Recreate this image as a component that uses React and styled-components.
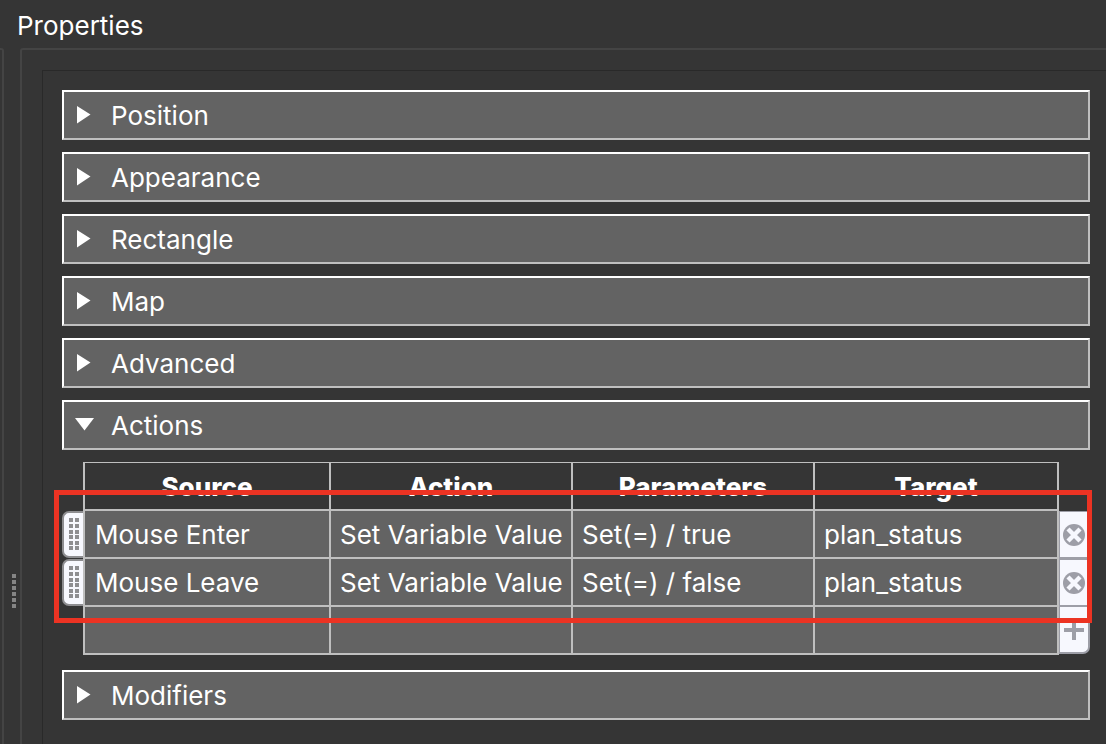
import React, { useState } from 'react';
import styled, { createGlobalStyle } from 'styled-components';

const columns = ['Source', 'Action', 'Parameters', 'Target'];

const actions = [
  ['Mouse Enter', 'Set Variable Value', 'Set(=) / true', 'plan_status'],
  ['Mouse Leave', 'Set Variable Value', 'Set(=) / false', 'plan_status'],
];

const splitterDots = [0, 1, 2, 3, 4, 5];
const gripRows = [0, 6, 12, 17, 23, 28];

const Arrow = ({ open }) => (
  <ArrowIcon viewBox="0 1 20 20" aria-hidden="true">
    <path d={open ? 'M1 3H20L10.5 15.5Z' : 'M3 1L16.5 9.5L3 18.5Z'} />
  </ArrowIcon>
);

const Section = ({ title, open, onToggle, children }) => (
  <section>
    <Heading>
      <HeadingButton type="button" aria-expanded={open} onClick={onToggle}>
        <Arrow open={open} />
        {title}
      </HeadingButton>
    </Heading>
    {open && children}
  </section>
);

const ActionsTable = () => (
  <TableWrap>
    <Table>
      <colgroup>
        <Col $width="21px" />
        <Col $width="248px" />
        <Col $width="242px" />
        <Col $width="242px" />
        <Col />
        <Col $width="31px" />
      </colgroup>
      <thead>
        <tr>
          <ToolCell />
          {columns.map((name) => (
            <HeadCell key={name} scope="col">{name}</HeadCell>
          ))}
          <ToolCell />
        </tr>
      </thead>
      <tbody>
        {actions.map((row) => (
          <tr key={row[0]}>
            <ToolCell>
              <DragHandle type="button" aria-label={`Move ${row[0]}`}>
                <svg width="11" height="33" fill="#8e8e91" aria-hidden="true">
                  {gripRows.map((y) => (
                    <path key={y} d={`M1 ${y}h4v4h-4zM7 ${y}h4v4h-4z`} />
                  ))}
                </svg>
              </DragHandle>
            </ToolCell>
            {row.map((text, i) => (
              <Cell key={columns[i]}>{text}</Cell>
            ))}
            <ToolCell>
              <RowButton type="button" aria-label={`Delete ${row[0]}`}>
                <svg width="22" height="22" viewBox="0 0 22 22" aria-hidden="true">
                  <circle cx="11" cy="11" r="11" fill="#9d9ea7" />
                  <path d="M5 5L17 17M17 5L5 17" stroke="#f7f8fe" strokeWidth="4.4" />
                </svg>
              </RowButton>
            </ToolCell>
          </tr>
        ))}
        <tr>
          <ToolCell />
          {columns.map((name) => (
            <Cell key={name} />
          ))}
          <ToolCell>
            <RowButton type="button" aria-label="Add action" $last>
              <svg width="22" height="22" viewBox="0 0 22 22" aria-hidden="true">
                <path d="M1 11H21M11 1V21" stroke="#9d9ea7" strokeWidth="4" />
              </svg>
            </RowButton>
          </ToolCell>
        </tr>
      </tbody>
    </Table>
    <Highlight />
  </TableWrap>
);

const sections = [
  { title: 'Position' },
  { title: 'Appearance' },
  { title: 'Rectangle' },
  { title: 'Map' },
  { title: 'Advanced' },
  { title: 'Actions', content: <ActionsTable /> },
  { title: 'Modifiers' },
];

const App = () => {
  const [opened, setOpened] = useState({ Actions: true });

  const toggle = (title) => {
    setOpened({ ...opened, [title]: !opened[title] });
  };

  return (
    <>
      <GlobalStyle />
      <Page>
        <Title>Properties</Title>
        <Body>
          <PreviousPane />
          <Splitter>
            {splitterDots.map((i) => (
              <SplitterDot key={i} />
            ))}
          </Splitter>
          <Pane>
            <Sections>
              {sections.map(({ title, content }) => (
                <Section
                  key={title}
                  title={title}
                  open={!!opened[title]}
                  onToggle={() => toggle(title)}
                >
                  {content}
                </Section>
              ))}
            </Sections>
          </Pane>
        </Body>
      </Page>
    </>
  );
};

const GlobalStyle = createGlobalStyle`
  * {
    box-sizing: border-box;
  }

  body {
    margin: 0;
    background: #353535;
    color: #fff;
    font-family: Inter, 'Liberation Sans', sans-serif;
    font-size: 26px;
    line-height: 32px;
  }

  button {
    font: inherit;
    color: inherit;
  }
`;

const Page = styled.main`
  display: flex;
  flex-direction: column;
  min-height: 100vh;
`;

const Title = styled.h1`
  margin: 0;
  padding: 10px 17px 6px;
  font-size: 26px;
  font-weight: 400;
`;

const Body = styled.div`
  display: flex;
  flex: 1;
`;

const PreviousPane = styled.div`
  width: 4px;
  border: solid #444;
  border-width: 2px 2px 0 0;
  border-top-right-radius: 3px;
`;

const Splitter = styled.div`
  display: flex;
  flex-direction: column;
  justify-content: flex-end;
  align-items: center;
  gap: 2px;
  width: 16px;
  padding: 0 0 136px 4px;
`;

const SplitterDot = styled.span`
  width: 4px;
  height: 4px;
  background: #858585;
`;

const Pane = styled.div`
  display: flex;
  flex: 1;
  min-width: 0;
  padding: 20px 0 0 20px;
  border: solid #444;
  border-width: 2px 0 0 2px;
  border-top-left-radius: 3px;
`;

const Sections = styled.div`
  display: flex;
  flex-direction: column;
  flex: 1;
  gap: 12px;
  min-width: 0;
  padding: 19px 16px 19px 19px;
  border: solid #292929;
  border-width: 1px 0 0 1px;
`;

const Heading = styled.h2`
  margin: 0;
  font-size: 26px;
  font-weight: 400;
`;

const HeadingButton = styled.button`
  display: flex;
  align-items: center;
  gap: 17px;
  width: 100%;
  height: 50px;
  padding: 2px 10px 0;
  border: 2px solid;
  border-color: #fff #bfbfbf #bfbfbf #fff;
  background: #636363;
  text-align: left;
`;

const ArrowIcon = styled.svg`
  width: 20px;
  height: 20px;
  fill: #fff;
  overflow: visible;
`;

const TableWrap = styled.div`
  position: relative;
  padding: 12px 0 3px;
`;

const Table = styled.table`
  width: 100%;
  table-layout: fixed;
  border-spacing: 0;
`;

const Col = styled.col`
  width: ${({ $width }) => $width || 'auto'};
`;

const HeadCell = styled.th`
  height: 49px;
  padding: 2px 0 0;
  border: solid #bfbfbf;
  border-width: 1px 2px 2px 0;
  font-weight: 800;

  &:nth-child(2) {
    border-left-width: 2px;
  }
`;

const Cell = styled.td`
  height: 48px;
  padding: 2px 9px 0;
  border: solid #bfbfbf;
  border-width: 0 2px 2px 0;
  background: #636363;
  white-space: nowrap;

  &:nth-child(2) {
    padding-left: 10px;
    border-left-width: 2px;
  }
`;

const ToolCell = styled.td`
  padding: 0;
  vertical-align: top;
`;

const DragHandle = styled.button`
  display: flex;
  align-items: center;
  justify-content: center;
  width: 100%;
  height: 47px;
  padding: 0;
  border: 2px solid #8e8e91;
  border-right: 0;
  border-radius: 7px 0 0 7px;
  background: #f7f8fe;
  cursor: grab;
`;

const RowButton = styled.button`
  display: flex;
  align-items: center;
  justify-content: center;
  width: 100%;
  height: ${({ $last }) => ($last ? '47px' : '48px')};
  padding: 0;
  border: solid #9d9ea7;
  border-width: ${({ $last }) => ($last ? '0 2px 2px 1px' : '1px 2px 2px 1px')};
  border-radius: ${({ $last }) => ($last ? '0 0 7px 0' : '0 3px 3px 0')};
  background: #f7f8fe;
`;

/* marks the action rows */
const Highlight = styled.div`
  position: absolute;
  top: 40px;
  right: -2px;
  left: -8px;
  height: 133px;
  border: 5px solid #ec3323;
  pointer-events: none;
`;

export default App;
